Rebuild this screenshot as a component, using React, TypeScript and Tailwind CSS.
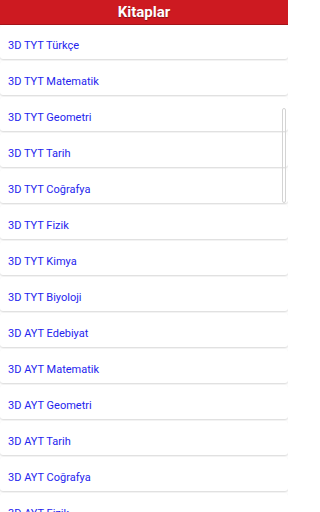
import React from 'react'

const books = [
  '3D TYT Türkçe',
  '3D TYT Matematik',
  '3D TYT Geometri',
  '3D TYT Tarih',
  '3D TYT Coğrafya',
  '3D TYT Fizik',
  '3D TYT Kimya',
  '3D TYT Biyoloji',
  '3D AYT Edebiyat',
  '3D AYT Matematik',
  '3D AYT Geometri',
  '3D AYT Tarih',
  '3D AYT Coğrafya',
  '3D AYT Fizik',
]

const App = () => {
  return (
    <div
      className="relative w-[288px] h-[512px] overflow-hidden bg-white"
      style={{ fontFamily: 'Roboto, "Liberation Sans", sans-serif' }}
    >
      <div className="h-[25px] bg-[#cd1a21] border-b border-[#a5141a] flex items-center justify-center">
        <p className="text-[15px] leading-[16px] font-bold text-white [text-shadow:0_1px_1px_rgba(0,0,0,0.35)]">
          Kitaplar
        </p>
      </div>
      <div className="flex flex-col">
        {books.map((b) => (
          <div
            key={b}
            className="h-[34px] mb-[2px] shrink-0 bg-white rounded-[3px] shadow-[0_1px_2px_rgba(0,0,0,0.16)] pl-2 pt-[14px]"
          >
            <p className="text-[11px] leading-[13px] text-[#2424ee]">{b}</p>
          </div>
        ))}
      </div>
      <div className="absolute right-[2px] top-[108px] h-[95px] w-[4px] rounded-[3px] border border-[#d4d4d4]" />
    </div>
  )
}

export default App
